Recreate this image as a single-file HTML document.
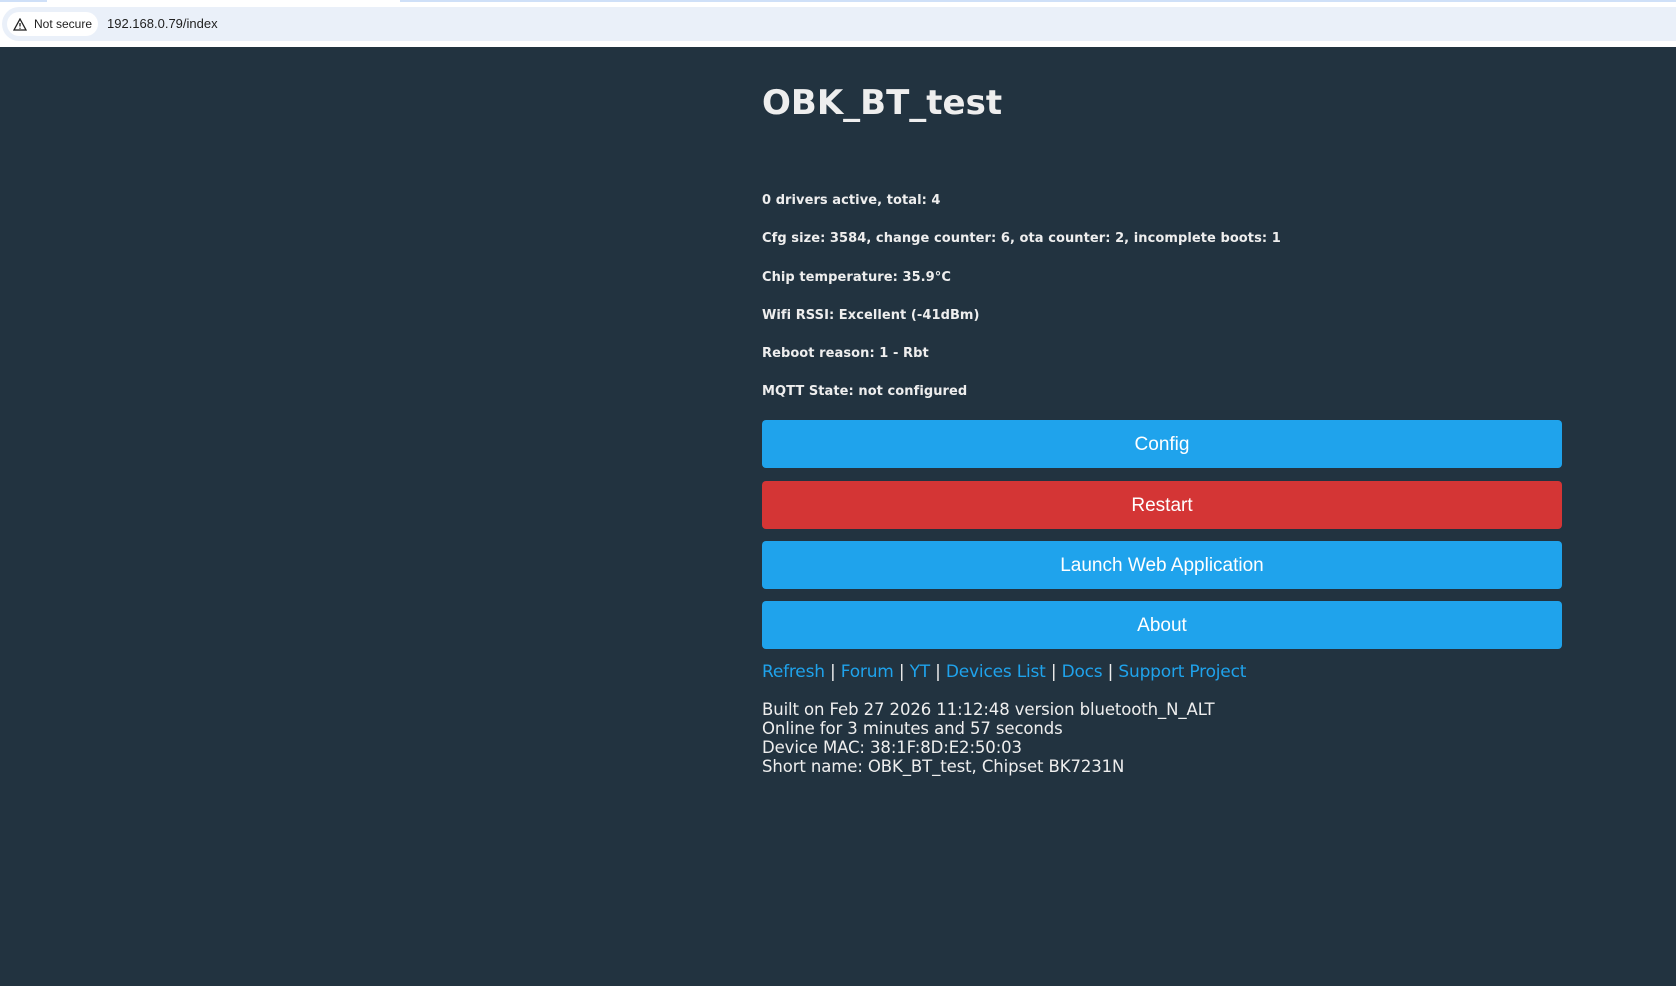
<!DOCTYPE html>
<html><head><meta charset="utf-8"><style>
*{margin:0;padding:0;box-sizing:border-box}
body{width:1676px;height:986px;background:#223340;overflow:hidden;font-family:"DejaVu Sans",Verdana,sans-serif;position:relative}
.top{position:absolute;left:0;top:0;width:1676px;height:47px;background:#fff}
.tl{position:absolute;top:0;height:2px;background:#cfe0f8}
.bar{position:absolute;left:2px;top:7px;width:1674px;height:34px;background:#eaf0f9;border-radius:17px 0 0 17px}
.ns{position:absolute;left:7px;top:12px;height:24px;width:91px;background:#fff;border-radius:12px;font:12px "Liberation Sans",sans-serif;color:#1f1f1f;line-height:24px;padding-left:27px}
.url{position:absolute;left:107px;top:16px;font:13px "Liberation Sans",sans-serif;color:#1f1f1f}
h1{position:absolute;left:762px;top:83px;font-size:34px;font-weight:bold;color:#eee}
.i{position:absolute;left:762px;font-size:13px;font-weight:bold;color:#eee;letter-spacing:0.06px}
.b{position:absolute;left:762px;width:800px;height:48px;border-radius:4px;background:#1fa3ec;color:#fff;font:19px "Liberation Sans",sans-serif;text-align:center;line-height:50px}
.links{position:absolute;left:762px;top:662px;font-size:17px;color:#eee;letter-spacing:-0.2px}
.links a{color:#1fa3ec;text-decoration:none}
.f{position:absolute;left:762px;top:700px;font-size:16.5px;line-height:19px;color:#eee;letter-spacing:-0.1px}
</style></head><body>
<div class="top"><div class="tl" style="left:0;width:47px"></div><div class="tl" style="left:400px;width:1276px"></div>
<div class="bar"></div>
<div class="ns"><svg style="position:absolute;left:6px;top:6px" width="14" height="13" viewBox="0 0 14 13"><path d="M7 1L13 12H1Z" fill="none" stroke="#1f1f1f" stroke-width="1.3"/><path d="M7 5v3.5M7 9.8v1" stroke="#1f1f1f" stroke-width="1.3"/></svg>Not secure</div>
<div class="url">192.168.0.79/index</div></div>
<h1>OBK_BT_test</h1>
<div class="i" style="top:193px">0 drivers active, total: 4</div>
<div class="i" style="top:231px">Cfg size: 3584, change counter: 6, ota counter: 2, incomplete boots: 1</div>
<div class="i" style="top:270px">Chip temperature: 35.9°C</div>
<div class="i" style="top:308px">Wifi RSSI: Excellent (-41dBm)</div>
<div class="i" style="top:346px">Reboot reason: 1 - Rbt</div>
<div class="i" style="top:384px">MQTT State: not configured</div>
<div class="b" style="top:420px">Config</div>
<div class="b" style="top:481px;background:#d43535">Restart</div>
<div class="b" style="top:541px">Launch Web Application</div>
<div class="b" style="top:601px">About</div>
<div class="links"><a>Refresh</a> | <a>Forum</a> | <a>YT</a> | <a>Devices List</a> | <a>Docs</a> | <a>Support Project</a></div>
<div class="f">Built on Feb 27 2026 11:12:48 version bluetooth_N_ALT<br>Online for 3 minutes and 57 seconds<br>Device MAC: 38:1F:8D:E2:50:03<br>Short name: OBK_BT_test, Chipset BK7231N</div>
</body></html>
